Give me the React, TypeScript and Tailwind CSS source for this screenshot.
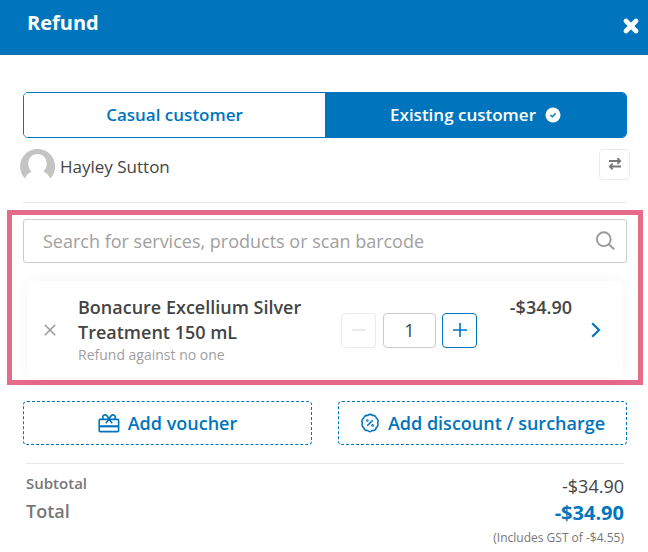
import React, { useState } from "react";

const CloseIcon = () => (
  <svg viewBox="0 0 16 16" className="w-4 h-4" fill="none" stroke="currentColor" strokeWidth="4.6" strokeLinecap="round">
    <path d="M3 3l10 10M13 3L3 13" />
  </svg>
);

const CheckBadgeIcon = () => (
  <svg viewBox="0 0 16 16" className="w-4 h-4">
    <circle cx="8" cy="8" r="7.5" fill="currentColor" />
    <path d="M5.4 8.1l1.9 1.7 3.3-3.4" fill="none" stroke="#0075bd" strokeWidth="1.4" />
  </svg>
);

const AvatarIcon = () => (
  <svg viewBox="0 0 35 35" className="w-[35px] h-[35px] shrink-0">
    <path
      fill="#c4c4c4"
      fillRule="evenodd"
      d="M5 29.6A17.5 17.5 0 1 1 30.2 29.6C28.8 26.5 26.6 24 23.3 22.6C25.6 20.8 26.7 18 26.7 14.6C26.7 9 22.8 5 17.5 5C12.2 5 8.3 9 8.3 14.6C8.3 18 9.4 20.8 11.7 22.6C8.4 24 6.4 26.5 5 29.6Z"
    />
  </svg>
);

const SwapIcon = () => (
  <svg viewBox="0 0 14 14" className="w-3.5 h-3.5" fill="none" stroke="currentColor" strokeWidth="1.8">
    <path d="M1 4h11.4M9.4 1.2L12.2 4L9.4 6.8M13 9.5H1.6M4.6 6.7L1.8 9.5l2.8 2.8" />
  </svg>
);

const SearchIcon = () => (
  <svg viewBox="0 0 20 20" className="w-5 h-5" fill="none" stroke="currentColor" strokeWidth="1.9">
    <circle cx="8.8" cy="8.2" r="6.9" />
    <path d="M13.6 13L19.2 18.4" />
  </svg>
);

const GiftIcon = () => (
  <svg viewBox="0 0 22 20" className="w-[22px] h-5" fill="none" stroke="currentColor" strokeWidth="1.6">
    <rect x="1.2" y="6.4" width="19.4" height="12.2" rx="0.8" />
    <path d="M1.2 13.3h19.4" strokeWidth="2.2" />
    <path d="M11 6.4C9.6 2.8 7.8 1.4 6.1 2C4.3 2.7 4.4 5 5.6 6.3M11 6.4C12.4 2.8 14.2 1.4 15.9 2C17.7 2.7 17.6 5 16.4 6.3M11 6.2L7.8 10.2M11 6.2L14.2 10.2" />
  </svg>
);

const DiscountIcon = () => (
  <svg viewBox="0 0 20 20" className="w-5 h-5" fill="none" stroke="currentColor" strokeWidth="1.6">
    <path d="M10 1.4Q11.4 1.4 12.3 2.4Q14.6 2.3 15.5 3.5Q16.1 4.1 16.4 5.2Q18 6.3 18.1 7.7Q18.2 8.8 17.6 10Q18.3 11.6 17.8 12.8Q17.4 14 16.2 14.7Q15.8 16.4 14.8 17Q13.7 17.7 12.3 17.5Q11.2 18.6 10 18.6Q8.8 18.6 7.7 17.5Q6.3 17.7 5.2 17Q4.2 16.4 3.8 14.7Q2.6 14 2.2 12.8Q1.7 11.6 2.4 10Q1.8 8.8 1.9 7.7Q2 6.3 3.6 5.2Q3.9 4.1 4.5 3.5Q5.4 2.3 7.7 2.4Q8.6 1.4 10 1.4Z" />
    <path d="M7.2 12.8L12.8 7.2" />
    <circle cx="7.4" cy="7.6" r="0.5" />
    <circle cx="12.6" cy="12.4" r="0.5" />
  </svg>
);

const actionClass =
  "h-11 flex items-center justify-center gap-2 rounded-[4px] border border-dashed border-[#0075bd] bg-white text-[18px] leading-6 font-semibold text-[#0075bd]";

export default function App() {
  const [customerType, setCustomerType] = useState("existing");
  const [query, setQuery] = useState("");
  const [quantity, setQuantity] = useState("1");

  const tabClass = (type: string) =>
    customerType === type ? "bg-[#0075bd] text-white" : "bg-white text-[#0075bd]";

  return (
    <div className="min-h-screen bg-white font-['Open_Sans',sans-serif] text-[#444]">
      {/* Header */}
      <header className="h-[55px] flex items-start justify-between pl-[27px] pr-[9px] pt-[11px] bg-[#0075bd] border-b border-[#1b6ca8] text-white">
        <h1 className="text-[20px] leading-6 font-bold">Refund</h1>
        <button aria-label="Close" className="pt-[7px]">
          <CloseIcon />
        </button>
      </header>

      <main className="pt-[37px]">
        {/* Customer */}
        <section className="pl-[23px] pr-[21px]">
          <div className="h-[46px] grid grid-cols-2 rounded-[5px] border border-[#0075bd] overflow-hidden text-[17px] leading-6 font-semibold">
            <button
              aria-pressed={customerType === "casual"}
              onClick={() => setCustomerType("casual")}
              className={tabClass("casual")}
            >
              Casual customer
            </button>
            <button
              aria-pressed={customerType === "existing"}
              onClick={() => setCustomerType("existing")}
              className={`flex items-center justify-center gap-[9px] ${tabClass("existing")}`}
            >
              Existing customer
              {customerType === "existing" && <CheckBadgeIcon />}
            </button>
          </div>

          <div className="-mx-[3px] mt-[11px] flex items-start justify-between">
            <div className="flex items-center gap-[5px] text-[17px] leading-6">
              <AvatarIcon />
              <span>Hayley Sutton</span>
            </div>
            <button
              aria-label="Change customer"
              className="w-[31px] h-[31px] flex items-center justify-center rounded-[4px] border border-[#ebebeb] pb-[2px] text-[#777]"
            >
              <SwapIcon />
            </button>
          </div>
          <hr className="mt-[18px] border-[#ebebeb]" />
        </section>

        {/* Items */}
        <section className="ml-[7px] mr-[5px] mt-[7px] px-[11px] pt-1 pb-[3px] border-5 border-[#e66a8a]">
          <div className="h-11 flex items-center rounded-[3px] border border-[#ccc] bg-white pl-[19px] pr-[11px]">
            <input
              type="text"
              aria-label="Search for services, products or scan barcode"
              placeholder="Search for services, products or scan barcode"
              value={query}
              onChange={(e) => setQuery(e.target.value)}
              className="flex-1 min-w-0 text-[18px] leading-6 outline-none placeholder:text-[#a0a0a0]"
            />
            <button aria-label="Search" className="text-[#999]">
              <SearchIcon />
            </button>
          </div>

          <div className="mx-1 mt-[18px] flex items-center rounded-[4px] bg-white pl-[17px] pr-[22px] pt-[14px] pb-3 shadow-[0_0_14px_rgba(60,60,120,0.05)]">
            <button aria-label="Remove item" className="text-[#999]">
              <svg viewBox="0 0 12 12" className="w-3 h-3" fill="none" stroke="currentColor" strokeWidth="1.5">
                <path d="M0.8 0.8l10.4 10.4M11.2 0.8L0.8 11.2" />
              </svg>
            </button>
            <div className="flex-1 min-w-0 pl-[22px] pr-4">
              <h2 className="text-[18px] leading-[25px] font-semibold">Bonacure Excellium Silver Treatment 150 mL</h2>
              <p className="text-[14px] leading-5 text-[#a0a0a0]">Refund against no one</p>
            </div>
            <div className="flex items-center">
              <button
                aria-label="Decrease quantity"
                className="w-[35px] h-[35px] flex items-center justify-center rounded-[4px] border border-[#ebebeb] text-[#e6e6e6]"
              >
                <svg viewBox="0 0 14 14" className="w-3.5 h-3.5" stroke="currentColor" strokeWidth="1.6">
                  <path d="M0 7h14" />
                </svg>
              </button>
              <input
                type="text"
                aria-label="Quantity"
                value={quantity}
                onChange={(e) => setQuantity(e.target.value)}
                className="ml-[7px] mr-[6px] w-[53px] h-[35px] rounded-[4px] border border-[#ccc] text-center text-[18px] leading-6"
              />
              <button
                aria-label="Increase quantity"
                className="w-[35px] h-[35px] flex items-center justify-center rounded-[4px] border border-[#0075bd] text-[#0075bd]"
              >
                <svg viewBox="0 0 14 14" className="w-3.5 h-3.5" stroke="currentColor" strokeWidth="1.6">
                  <path d="M0 7h14M7 0v14" />
                </svg>
              </button>
            </div>
            <span className="w-[95px] self-start text-right text-[18px] leading-[25px] font-semibold">-$34.90</span>
            <button aria-label="Edit item" className="ml-[19px] text-[#0075bd]">
              <svg viewBox="0 0 10 16" className="w-[10px] h-4" fill="none" stroke="currentColor" strokeWidth="2.2">
                <path d="M1.2 1.2L8 8l-6.8 6.8" />
              </svg>
            </button>
          </div>
        </section>

        {/* Adjustments */}
        <section className="mt-4 pl-[23px] pr-[21px] grid grid-cols-2 gap-[26px]">
          <button className={actionClass}>
            <GiftIcon />
            Add voucher
          </button>
          <button className={actionClass}>
            <DiscountIcon />
            Add discount / surcharge
          </button>
        </section>

        {/* Totals */}
        <section className="ml-[26px] mr-6 mt-[18px] border-t border-[#e6e6e6] pt-[7px]">
          <dl className="text-[#777]">
            <div className="flex justify-between">
              <dt className="text-[15px] leading-6 font-semibold">Subtotal</dt>
              <dd className="pt-[3px] text-[18px] leading-6 text-[#444]">-$34.90</dd>
            </div>
            <div className="flex justify-between">
              <dt className="pt-px text-[18px] leading-6 font-semibold">Total</dt>
              <dd className="pt-[3px] text-right">
                <span className="block text-[20px] leading-6 font-bold text-[#0075bd]">-$34.90</span>
                <small className="block pt-px text-[12px] leading-6">(Includes GST of -$4.55)</small>
              </dd>
            </div>
          </dl>
        </section>
      </main>
    </div>
  );
}
